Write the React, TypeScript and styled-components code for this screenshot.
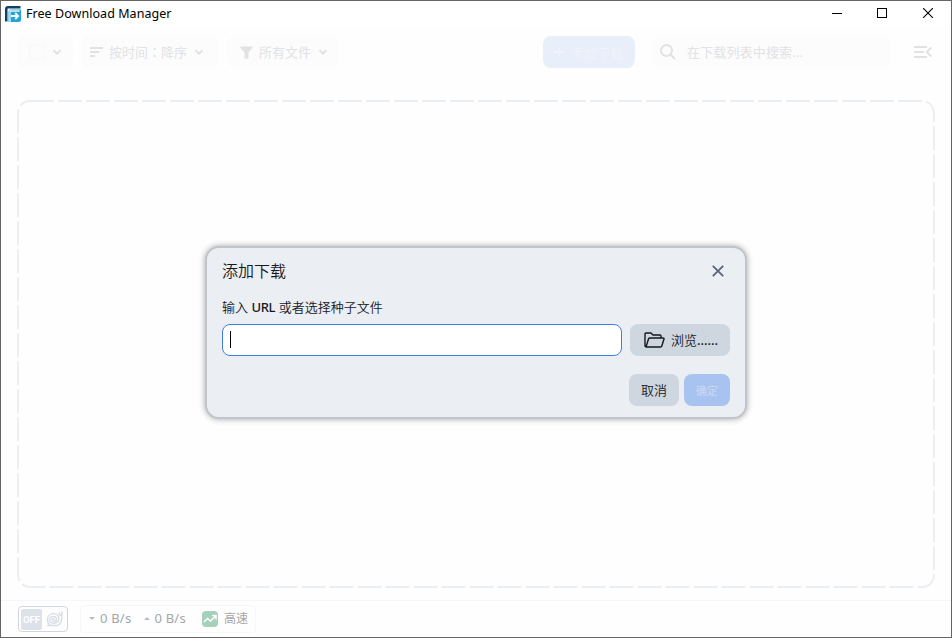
import React from "react";
import styled, { createGlobalStyle, css } from "styled-components";

const Global = createGlobalStyle`
  * { box-sizing: border-box; }
  body { margin: 0; overflow: hidden; background: #fff; }
  svg { display: block; flex: none; }
  button { border: 0; margin: 0; padding: 0; font: inherit; }
`;

const Window = styled.div`
  position: relative;
  width: 952px;
  height: 638px;
  border: 1px solid #656565;
  display: flex;
  flex-direction: column;
  background: #fefefe;
  font-family: "Noto Sans", "Noto Sans CJK SC", sans-serif;
  font-size: 13px;
`;

const TitleBar = styled.header`
  height: 25px;
  flex: none;
  display: flex;
  align-items: center;
  padding-left: 4px;
  background: #fff;
`;

const AppTitle = styled.h1`
  margin: 0 auto 0 5px;
  font-size: 12.5px;
  line-height: 24px;
  font-weight: 400;
  color: #000;
  letter-spacing: 0.05px;
`;

const WindowButton = styled.button`
  width: 46px;
  height: 25px;
  padding-bottom: 1px;
  display: grid;
  place-items: center;
  background: none;
`;

const Toolbar = styled.nav`
  height: 52px;
  flex: none;
  display: flex;
  align-items: center;
  padding: 0 19px 0 16px;
  color: #e2e2e4;
`;

const ToolButton = styled.button<{ $width: number; $inset: number }>`
  width: ${(p) => p.$width}px;
  height: 32px;
  margin-right: 8px;
  padding-left: ${(p) => p.$inset}px;
  display: flex;
  align-items: center;
  border-radius: 8px;
  background: #fcfcfc;
  color: inherit;
`;

const CheckBox = styled.span`
  width: 16px;
  height: 16px;
  margin-right: 4px;
  border: 1px solid #f8f8f9;
  border-radius: 4px;
`;

const ToolLabel = styled.span`
  margin: 0 4px 0 6px;
  line-height: 20px;
  white-space: nowrap;
`;

const WideColon = styled.span`
  font-family: "Noto Sans CJK TC", sans-serif;
`;

const AddButton = styled.button`
  width: 92px;
  height: 32px;
  margin: 0 17px 0 auto;
  display: flex;
  align-items: center;
  padding-left: 11px;
  gap: 7px;
  border-radius: 8px;
  background: #e8eefa;
  color: #eff3fc;
  white-space: nowrap;
`;

const SearchBox = styled.div`
  width: 239px;
  height: 32px;
  margin-right: 23px;
  display: flex;
  align-items: center;
  padding-left: 8px;
  gap: 11px;
  border-radius: 8px;
  background: #fcfcfc;
  line-height: 20px;
  letter-spacing: 0.15px;
`;

const DropArea = styled.main`
  flex: 1;
  padding: 22px 15px 0 16px;
`;

const StatusBar = styled.footer`
  height: 37px;
  flex: none;
  display: flex;
  align-items: center;
  gap: 12px;
  padding-left: 17px;
  border-top: 1px solid #f5f6f7;
`;

const SnailSwitch = styled.div`
  width: 50px;
  height: 26px;
  padding: 2px;
  display: flex;
  align-items: center;
  gap: 4px;
  border: 1px solid #d1d5de;
  border-radius: 4px;
`;

const OffLabel = styled.span`
  width: 21px;
  height: 21px;
  display: grid;
  place-items: center;
  border-radius: 2px;
  background: #dde1e9;
  color: #fff;
  font: 700 9.5px/21px Roboto, sans-serif;
`;

const SpeedPanel = styled.div`
  width: 176px;
  height: 28px;
  display: flex;
  align-items: center;
  padding: 0 0 1px 8px;
  border: 1px solid #f8f8f9;
  border-radius: 4px;
  color: #a5a6a9;
`;

const Arrow = styled.i<{ $up?: boolean }>`
  border: 3.5px solid transparent;
  ${(p) =>
    p.$up
      ? css`border-bottom-color: #b9bbc3; border-top: 0;`
      : css`border-top-color: #b9bbc3; border-bottom: 0;`}
`;

const Speed = styled.span`
  width: 43.5px;
  margin: -1px 0 0 5px;
  letter-spacing: 0.2px;
  line-height: 20px;
  white-space: nowrap;
`;

const ModeIcon = styled.span`
  width: 16px;
  height: 16px;
  margin: 1px 6px 0 4px;
  display: grid;
  place-items: center;
  border-radius: 4px;
  background: #a5d1bb;
`;

const ModeName = styled.span`
  font-size: 12px;
  line-height: 20px;
`;

const Dialog = styled.section`
  position: absolute;
  left: 204px;
  top: 245px;
  width: 542px;
  height: 173px;
  padding: 9px 15px 0;
  border: 2px solid #c0c5cc;
  border-radius: 14px;
  background: #ebeef3;
  background-clip: padding-box;
  box-shadow: 0 0 6px rgba(0, 0, 0, 0.35);
  color: #16181d;
`;

const DialogHead = styled.div`
  height: 28px;
  display: flex;
  align-items: center;
  justify-content: space-between;
  padding-right: 6px;
`;

const DialogTitle = styled.h2`
  margin: 0;
  font-size: 16px;
  font-weight: 350;
  line-height: 28px;
`;

const FieldLabel = styled.label`
  display: block;
  margin-top: 12px;
  height: 24px;
  line-height: 20px;
  font-size: 13px;
  font-weight: 350;
`;

const Latin = styled.span`
  font-weight: 500;
  letter-spacing: -0.3px;
`;

const FieldRow = styled.div`
  display: flex;
  gap: 8px;
  margin-top: 3px;
`;

const UrlField = styled.div`
  width: 400px;
  height: 32px;
  padding: 6px 7px;
  border: 1px solid #3f7ddd;
  border-radius: 8px;
  background: #fff;
`;

const Caret = styled.span`
  display: block;
  width: 1px;
  height: 17px;
  background: #000;
`;

const DialogButton = styled.button<{ $width: number; $primary?: boolean }>`
  width: ${(p) => p.$width}px;
  height: 32px;
  display: flex;
  align-items: center;
  justify-content: center;
  gap: 6px;
  border-radius: 8px;
  background: ${(p) => (p.$primary ? "#a8c3ef" : "#ced6df")};
  color: ${(p) => (p.$primary ? "#c9d9f4" : "#16181d")};
  font-size: ${(p) => (p.$primary ? 11 : 13)}px;
  font-weight: ${(p) => (p.$primary ? 400 : 350)};
  line-height: 19px;
  white-space: nowrap;
`;

const BrowseIcon = styled.svg`
  margin-left: 2px;
`;

const Ellipsis = styled.span`
  font-weight: 500;
`;

const Actions = styled.div`
  display: flex;
  justify-content: flex-end;
  gap: 5px;
  margin-top: 18px;
`;

const Logo = () => (
  <svg width="16" height="16" viewBox="0 0 16 16">
    <path d="M1.25 15.5V3Q1.25 1.25 3 1.25H15.5" fill="none" stroke="#123f63" strokeWidth="2.5" />
    <path d="M3.5 6Q3.5 3.5 6 3.5H16V13.5Q16 16 13.5 16H3.5Z" fill="#1fa5d6" />
    <path d="M5 16V5H14.5" fill="none" stroke="#e9f6fb" strokeWidth="1.3" />
    <path d="M6 10H13M10.2 7L13.2 10L10.2 13" fill="none" stroke="#fff" strokeWidth="1.8" />
  </svg>
);

const Chevron = () => (
  <svg width="16" height="16" viewBox="0 0 16 16" fill="none" stroke="currentColor" strokeWidth="2">
    <path d="M4.5 6.2L8 9.7L11.5 6.2" />
  </svg>
);

const Snail = () => (
  <svg width="18" height="18" viewBox="0 0 18 18" fill="none" stroke="#d9dde5" strokeWidth="1.4" strokeLinecap="round">
    <path d="M8 9.2C8 8 6.2 8.3 6.2 9.8C6.2 12 10.4 12 10.4 9C10.4 5.2 3.8 5.4 3.8 10C3.8 14.8 12.8 14.2 12.8 8.5C12.8 1.8 1.5 2 1.5 9.5C1.5 12 2.6 14 4 15" />
    <path d="M1.5 15.5H11C15 15 16 11 16 5M13.5 2.5V5L16 6V2" />
  </svg>
);

export default function App() {
  return (
    <>
      <Global />
      <Window>
        <TitleBar>
          <Logo />
          <AppTitle>Free Download Manager</AppTitle>
          <WindowButton aria-label="Minimize">
            <svg width="12" height="10" shapeRendering="crispEdges"><path d="M2 5.5H12" stroke="#000" /></svg>
          </WindowButton>
          <WindowButton aria-label="Maximize">
            <svg width="10" height="10" shapeRendering="crispEdges"><rect x=".5" y=".5" width="9" height="9" fill="none" stroke="#000" /></svg>
          </WindowButton>
          <WindowButton aria-label="Close">
            <svg width="10" height="10"><path d="M0 0L10 10M10 0L0 10" stroke="#000" strokeWidth="1.1" /></svg>
          </WindowButton>
        </TitleBar>

        <Toolbar>
          <ToolButton $width={56} $inset={12}>
            <CheckBox />
            <Chevron />
          </ToolButton>
          <ToolButton $width={138} $inset={8}>
            <svg width="14" height="12" viewBox="0 0 14 12" fill="none" stroke="currentColor" strokeWidth="2"><path d="M1 2H14M1 6H10.5M1 10H6" /></svg>
            <ToolLabel>按时间<WideColon lang="zh-TW">：</WideColon>降序</ToolLabel>
            <Chevron />
          </ToolButton>
          <ToolButton $width={112} $inset={13}>
            <svg width="13" height="13" viewBox="0 0 13 13"><path d="M.5 .5H12.5V2L8.5 6.5V12.5H4.5V6.5L.5 2Z" fill="currentColor" /></svg>
            <ToolLabel>所有文件</ToolLabel>
            <Chevron />
          </ToolButton>
          <AddButton>
            <svg width="10" height="10" viewBox="0 0 10 10"><path d="M5 0V10M0 5H10" stroke="currentColor" strokeWidth="1.6" /></svg>
            添加下载
          </AddButton>
          <SearchBox>
            <svg width="16" height="16" viewBox="0 0 16 16" fill="none" stroke="currentColor" strokeWidth="2"><circle cx="6.5" cy="6.5" r="5.5" /><path d="M10.5 10.5L15 15" /></svg>
            在下载列表中搜索...
          </SearchBox>
          <svg width="18" height="12" viewBox="0 0 18 12" fill="none" stroke="currentColor" strokeWidth="2"><path d="M0 1H13M0 6H10M0 11H13M17.3 1.5L12.8 6L17.3 10.5" /></svg>
        </Toolbar>

        <DropArea>
          <svg width="918" height="488">
            <rect x="1" y="1" width="916" height="486" rx="12" fill="none" stroke="#ebeef3" strokeWidth="2" strokeDasharray="24 4" />
          </svg>
        </DropArea>

        <StatusBar>
          <SnailSwitch>
            <OffLabel>OFF</OffLabel>
            <Snail />
          </SnailSwitch>
          <SpeedPanel>
            <Arrow />
            <Speed>0 B/s</Speed>
            <Arrow $up />
            <Speed>0 B/s</Speed>
            <ModeIcon>
              <svg width="14" height="10" viewBox="0 0 14 10" fill="none" stroke="#fff" strokeWidth="1.5"><path d="M1 8L4.5 4.5L7.5 7L12.5 2M9 1.5H13V5.5" /></svg>
            </ModeIcon>
            <ModeName>高速</ModeName>
          </SpeedPanel>
        </StatusBar>

        <Dialog>
          <DialogHead>
            <DialogTitle>添加下载</DialogTitle>
            <svg width="12" height="12" viewBox="0 0 12 12"><path d="M.8.8L11.2 11.2M11.2.8L.8 11.2" stroke="#5b6478" strokeWidth="1.8" /></svg>
          </DialogHead>
          <FieldLabel>输入 <Latin>URL</Latin> 或者选择种子文件</FieldLabel>
          <FieldRow>
            <UrlField><Caret /></UrlField>
            <DialogButton $width={100}>
              <BrowseIcon width="21" height="16" viewBox="0 0 21 16" fill="none" stroke="#16181d" strokeWidth="1.4" strokeLinejoin="round"><path d="M2 15L1 14V2Q1 1 2 1H7L9 3H16Q17 3 17 4V6M2 15L4.5 7Q4.8 6 6 6H19Q20.3 6 20 7L17.8 14Q17.5 15 16.5 15Z" /></BrowseIcon>
              <span>浏览<Ellipsis>......</Ellipsis></span>
            </DialogButton>
          </FieldRow>
          <Actions>
            <DialogButton $width={50}>取消</DialogButton>
            <DialogButton $width={46} $primary>确定</DialogButton>
          </Actions>
        </Dialog>
      </Window>
    </>
  );
}
